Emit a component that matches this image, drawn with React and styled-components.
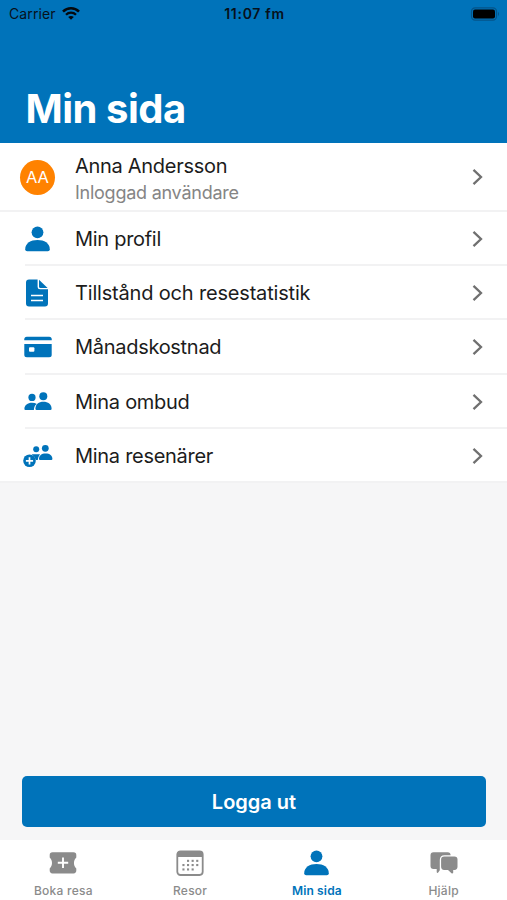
import styled, { createGlobalStyle } from "styled-components";

const GlobalStyle = createGlobalStyle`
  * {
    box-sizing: border-box;
  }
  body {
    margin: 0;
    font-family: Inter, "Liberation Sans", sans-serif;
    background-color: #f6f6f7;
  }
`;

const Page = styled.div`
  width: 507px;
  height: 900px;
  display: flex;
  flex-direction: column;
  overflow: hidden;
  background-color: #f6f6f7;
`;

const Header = styled.header`
  height: 142.5px;
  flex-shrink: 0;
  display: flex;
  flex-direction: column;
  justify-content: space-between;
  background-color: #0073ba;
`;

const StatusBar = styled.div`
  height: 27px;
  padding: 0 7px 0 9px;
  display: grid;
  grid-template-columns: 1fr auto 1fr;
  align-items: center;
  font-size: 14px;
  line-height: 27px;
  color: #07111b;
`;

const Carrier = styled.div`
  display: flex;
  align-items: center;
  gap: 6px;
  letter-spacing: 0.1px;
`;

const Clock = styled.div`
  font-weight: 600;
  letter-spacing: 0.7px;
`;

const Battery = styled.svg`
  justify-self: end;
`;

const Title = styled.h1`
  margin: 0;
  padding: 0 25.5px 9px;
  font-size: 40px;
  line-height: 50px;
  font-weight: 700;
  letter-spacing: -0.5px;
  color: #fff;
`;

const List = styled.div`
  display: flex;
  flex-direction: column;
`;

const Row = styled.div`
  height: ${({ $tall }) => ($tall ? "69.5px" : "54.2px")};
  display: flex;
  align-items: center;
  background-color: #fff;
`;

const Divider = styled.div`
  height: 2px;
  margin-top: -2px;
  margin-left: ${({ $inset }) => ($inset ? "25px" : "0")};
  background-color: #f2f2f3;
`;

const IconSlot = styled.div`
  width: 75px;
  flex-shrink: 0;
  display: flex;
  justify-content: center;
  color: #0073ba;
`;

const Avatar = styled.div`
  width: 35px;
  height: 35px;
  border-radius: 50%;
  display: flex;
  align-items: center;
  justify-content: center;
  font-size: 16.5px;
  color: #fff;
  background-color: #ff8200;
`;

const RowText = styled.div`
  flex: 1;
  font-size: 20px;
  line-height: 26px;
  letter-spacing: ${({ $spacing }) => $spacing || "-0.29px"};
  color: #1c1c1c;
`;

const UserText = styled(RowText)`
  padding-top: 4px;
`;

const Subtitle = styled.div`
  font-size: 18px;
  line-height: 27px;
  letter-spacing: -0.25px;
  color: #858585;
`;

const Chevron = styled.svg`
  margin-right: 24px;
`;

const Footer = styled.div`
  margin-top: auto;
  padding: 0 21px 13px 22px;
`;

const Button = styled.button`
  width: 100%;
  height: 51px;
  padding: 0;
  border: none;
  border-radius: 5px;
  font-family: inherit;
  font-size: 20px;
  font-weight: 600;
  color: #fff;
  background-color: #0073ba;
`;

const TabBar = styled.nav`
  height: 60px;
  flex-shrink: 0;
  display: grid;
  grid-template-columns: repeat(4, 1fr);
  background-color: #fff;
`;

const Tab = styled.div`
  padding-top: 10px;
  display: flex;
  flex-direction: column;
  align-items: center;
  font-size: 12px;
  line-height: 16px;
  font-weight: ${({ $active }) => ($active ? 600 : 500)};
  letter-spacing: ${({ $active }) => ($active ? "0.15px" : "0.25px")};
  color: ${({ $active }) => ($active ? "#0073ba" : "#8b8b8b")};
  svg {
    margin-bottom: 7px;
  }
`;

const WifiIcon = () => (
  <svg width="18" height="14" viewBox="0 0 18 14" fill="none" stroke="#05090d">
    <path d="M1 4.6C5.5 .2 12.5 .2 17 4.6" strokeWidth="2.6" />
    <path d="M4 7.7C6.8 4.9 11.2 4.9 14 7.7" strokeWidth="2.3" />
    <path d="M9 12.8 6.2 10C7.7 8.5 10.3 8.5 11.8 10Z" fill="#05090d" stroke="none" />
  </svg>
);

const PersonIcon = () => (
  <svg width="25" height="26" viewBox="0 0 25 26" fill="currentColor">
    <circle cx="12.5" cy="6.3" r="5.9" />
    <path d="M.2 23.2C.2 17.2 5.7 14 12.5 14S24.8 17.2 24.8 23.2Q24.8 25.2 22.8 25.2H2.2Q.2 25.2 .2 23.2Z" />
  </svg>
);

const DocumentIcon = () => (
  <svg width="23" height="28" viewBox="0 0 23 28" fill="currentColor">
    <path d="M3 .5H11.6V8Q11.6 10.3 14 10.3H22V24.5Q22 27.5 19 27.5H3Q0 27.5 0 24.5V3.5Q0 .5 3 .5Z" />
    <path d="M13 .7 21.6 9.1H14.4Q13 9.1 13 7.7Z" />
    <path d="M5 16.5H17M5 21.5H17" stroke="#fff" strokeWidth="1.7" />
  </svg>
);

const CardIcon = () => (
  <svg width="28" height="22" viewBox="0 0 28 22" fill="currentColor">
    <path d="M.3 4.3V3.2Q.3 .7 2.8 .7H25.2Q27.7 .7 27.7 3.2V4.3Z" />
    <path d="M.3 8H27.7V18.8Q27.7 21.3 25.2 21.3H2.8Q.3 21.3 .3 18.8Z" />
    <rect x="5" y="11.2" width="5.4" height="4.6" rx="1" fill="#fff" />
  </svg>
);

const PeopleIcon = () => (
  <svg width="28" height="19" viewBox="0 0 28 19" fill="currentColor">
    <circle cx="8" cy="5.4" r="3.6" />
    <circle cx="19.3" cy="4.2" r="4" />
    <path d="M.4 17C.4 13.2 3.7 10.8 8 10.8Q11 10.8 12.8 12C10.8 13.3 9.9 15.4 9.9 18H1.4Q.4 18 .4 17Z" />
    <path d="M11.4 16.8C11.4 12.2 14.8 9.8 19.4 9.8S27.6 12.2 27.6 16.8Q27.6 18 26.4 18H12.6Q11.4 18 11.4 16.8Z" />
  </svg>
);

const AddPeopleIcon = () => (
  <svg width="30" height="24" viewBox="0 0 30 24" fill="currentColor">
    <circle cx="13.2" cy="5.3" r="3" />
    <circle cx="22.3" cy="4.3" r="3.4" />
    <path d="M8.6 10.2H17Q15.2 12.4 14.8 15.9H12.7Q11.5 12 8.6 10.2Z" />
    <path d="M16 15C16 11.2 18.4 9.4 22.6 9.4S29.4 11.3 29.4 15Q29.4 16 28.4 16H17Q16 16 16 15Z" />
    <circle cx="6.5" cy="16.8" r="6.3" />
    <path d="M6.5 13.2V20.4M2.9 16.8H10.1" stroke="#fff" strokeWidth="1.7" />
  </svg>
);

const TicketIcon = () => (
  <svg width="28" height="26" viewBox="0 0 28 26" fill="currentColor">
    <path d="M3.5 2.2H24.5Q27.3 2.2 27.3 5V7.4C24.2 10.4 24.2 15.4 27.3 18.4V20.6Q27.3 23.4 24.5 23.4H3.5Q.7 23.4 .7 20.6V18.4C3.8 15.4 3.8 10.4 .7 7.4V5Q.7 2.2 3.5 2.2Z" />
    <path d="M14 7.6V18M8.8 12.8H19.2" stroke="#fff" strokeWidth="1.9" />
  </svg>
);

const dots = [
  [12, 10.8], [16.6, 10.8], [21.2, 10.8],
  [7.4, 15], [12, 15], [16.6, 15], [21.2, 15],
  [7.4, 19.4], [12, 19.4], [16.6, 19.4],
];

const CalendarIcon = () => (
  <svg width="28" height="26" viewBox="0 0 28 26" fill="currentColor">
    <rect x="1.3" y="1.4" width="25.4" height="23.6" rx="3.2" fill="none" stroke="currentColor" strokeWidth="1.8" />
    <path d="M1 7V4Q1 1 4 1H24Q27 1 27 4V7Z" />
    {dots.map(([x, y]) => (
      <rect key={`${x}-${y}`} x={x - 1} y={y - 1} width="2.1" height="2.1" />
    ))}
  </svg>
);

const ChatIcon = () => (
  <svg width="28" height="26" viewBox="0 0 28 26" fill="currentColor">
    <path d="M3.5 2.3H17.6Q20.6 2.3 20.6 5.2H14.5Q9.8 5.2 9.8 9.9V20.2L8 22.8Q7.2 23.2 6.7 22.2V18.9H3.5Q.5 18.9 .5 15.9V5.3Q.5 2.3 3.5 2.3Z" />
    <path d="M14.2 6.5H24.4Q27.5 6.5 27.5 9.6V16.8Q27.5 19.9 24.4 19.9H23.2V22.8Q22.6 24.2 21.5 23.2L18 19.9H14.2Q11.1 19.9 11.1 16.8V9.6Q11.1 6.5 14.2 6.5Z" />
  </svg>
);

const RowChevron = () => (
  <Chevron width="11" height="18" viewBox="0 0 11 18" fill="none" stroke="#707070" strokeWidth="2.3">
    <path d="M1.5 1.8 9 9 1.5 16.2" />
  </Chevron>
);

const items = [
  { label: "Min profil", Icon: PersonIcon },
  { label: "Tillstånd och resestatistik", Icon: DocumentIcon, spacing: "-0.18px" },
  { label: "Månadskostnad", Icon: CardIcon },
  { label: "Mina ombud", Icon: PeopleIcon },
  { label: "Mina resenärer", Icon: AddPeopleIcon },
];

const tabs = [
  { label: "Boka resa", Icon: TicketIcon },
  { label: "Resor", Icon: CalendarIcon },
  { label: "Min sida", Icon: PersonIcon, active: true },
  { label: "Hjälp", Icon: ChatIcon },
];

export default function App() {
  return (
    <>
      <GlobalStyle />
      <Page>
        <Header>
          <StatusBar>
            <Carrier>
              Carrier
              <WifiIcon />
            </Carrier>
            <Clock>11:07 fm</Clock>
            <Battery width="30" height="14" viewBox="0 0 30 14">
              <rect x="1.5" y=".8" width="25" height="12.4" rx="3.6" fill="none" stroke="#045489" strokeWidth="1.2" />
              <rect x="3" y="2.4" width="22" height="9.2" rx="2" fill="#000" />
              <path d="M28 4.8Q30 7 28 9.2Z" fill="#045489" />
            </Battery>
          </StatusBar>
          <Title>Min sida</Title>
        </Header>

        <List>
          <Row $tall>
            <IconSlot>
              <Avatar>AA</Avatar>
            </IconSlot>
            <UserText>
              Anna Andersson
              <Subtitle>Inloggad användare</Subtitle>
            </UserText>
            <RowChevron />
          </Row>
          <Divider />
          {items.map(({ label, Icon, spacing }, i) => (
            <div key={label}>
              <Row>
                <IconSlot>
                  <Icon />
                </IconSlot>
                <RowText $spacing={spacing}>{label}</RowText>
                <RowChevron />
              </Row>
              <Divider $inset={i < items.length - 1} />
            </div>
          ))}
        </List>

        <Footer>
          <Button>Logga ut</Button>
        </Footer>

        <TabBar>
          {tabs.map(({ label, Icon, active }) => (
            <Tab key={label} $active={active}>
              <Icon />
              {label}
            </Tab>
          ))}
        </TabBar>
      </Page>
    </>
  );
}
